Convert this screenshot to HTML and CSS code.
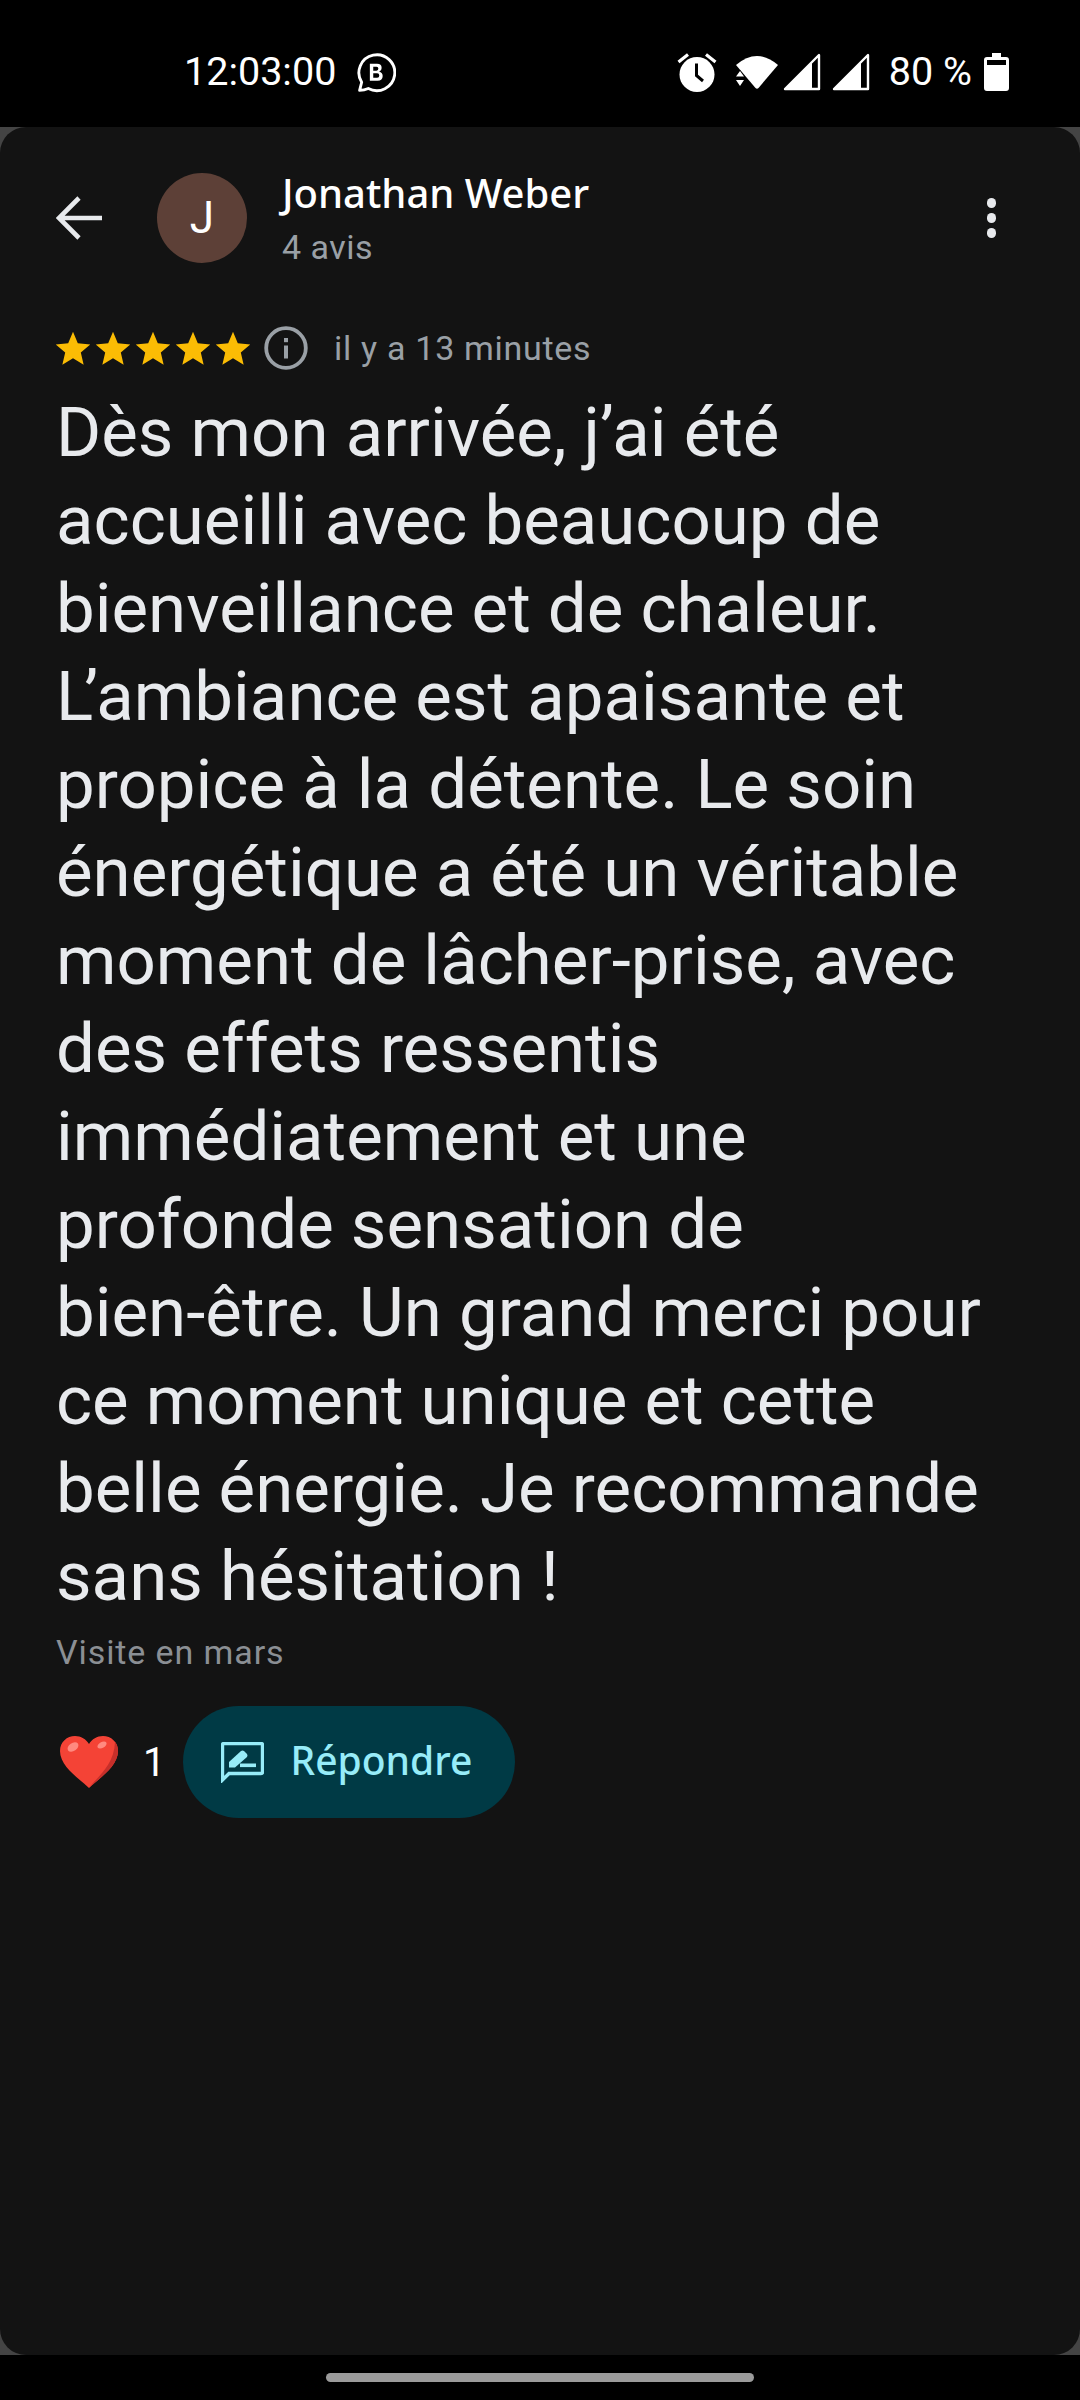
FILE: index.html
```html
<!DOCTYPE html>
<html lang="fr">
<head>
  <meta charset="UTF-8">
  <meta name="viewport" content="width=device-width, initial-scale=1.0">
  <title>Avis - Jonathan Weber</title>
  <link rel="stylesheet" href="styles.css">
</head>
<body>
  <!-- Status bar -->
  <div class="status-bar">
    <div class="status-left">
      <span class="clock">12:03:00</span>
      <svg class="biz-icon" viewBox="0 0 40 40">
        <path d="M4.5 37.5 6.5 29.5A17.5 17.5 0 1 1 13 35.6Q9 37.5 4.5 37.5Z" fill="none" stroke="#fff" stroke-width="2.8" stroke-linejoin="round"/>
        <path d="M14.5 11.5H21.5Q26 11.5 26 15.5 26 18.3 23.6 19.2 27 20 27 23.4 27 28 22 28H14.5ZM17.8 14.3V18.2H21Q22.8 18.2 22.8 16.2 22.8 14.3 21 14.3ZM17.8 20.8V25.2H21.6Q23.7 25.2 23.7 23 23.7 20.8 21.6 20.8Z" fill="#fff" fill-rule="evenodd"/>
      </svg>
    </div>
    <div class="status-right">
      <svg class="alarm-icon" viewBox="0 0 40 40">
        <path d="M1.5 10 11 2.5M38.5 10 29 2.5" stroke="#fff" stroke-width="3.2" fill="none"/>
        <circle cx="20" cy="22.5" r="17.5" fill="#fff"/>
        <path d="M19.5 11.5V23.5L26 29" stroke="#000" stroke-width="3" fill="none"/>
      </svg>
      <svg class="wifi-icon" viewBox="0 0 42 36">
        <path d="M0 11Q21-7 42 11L22.5 34Q21 35.5 19.5 34Z" fill="#fff"/>
        <path d="M0 21.5 8 21.5 4 16ZM0 25 8 25 4 31Z" fill="#000"/>
        <path d="M0 22.5H8L4 17ZM0 26H8L4 32Z" fill="#fff"/>
      </svg>
      <svg class="signal-icon" viewBox="0 0 38 38">
        <path d="M36 2V36H2Z" fill="none" stroke="#fff" stroke-width="2.4" stroke-linejoin="round"/>
        <path d="M29 9V36H2Z" fill="#fff"/>
      </svg>
      <svg class="signal-icon" viewBox="0 0 38 38">
        <path d="M36 2V36H2Z" fill="none" stroke="#fff" stroke-width="2.4" stroke-linejoin="round"/>
        <path d="M29 9V36H2Z" fill="#fff"/>
      </svg>
      <span class="battery-text">80 %</span>
      <svg class="battery-icon" viewBox="0 0 25 38">
        <path d="M8 0H17V4H22Q25 4 25 7V35Q25 38 22 38H3Q0 38 0 35V7Q0 4 3 4H8Z" fill="#fff"/>
        <rect x="3" y="7" width="19" height="5" fill="#000"/>
      </svg>
    </div>
  </div>

  <div class="card-wrap">
    <div class="card">
      <div class="review-header">
        <svg class="back-icon" viewBox="0 0 46 44">
          <path d="M46 22H4M23 2 3 22 23 42" fill="none" stroke="#e8eaed" stroke-width="4.6"/>
        </svg>
        <div class="avatar">J</div>
        <div class="author">
          <div class="author-name">Jonathan Weber</div>
          <div class="author-count">4 avis</div>
        </div>
        <div class="more-btn">
          <span class="dot"></span>
          <span class="dot"></span>
          <span class="dot"></span>
        </div>
      </div>

      <div class="rating-row">
        <div class="stars">
          <svg class="star" viewBox="0 0 24 24"><path d="M12 1.2 15.2 8.9 23.5 9.6 17.2 15 19.1 23.1 12 18.8 4.9 23.1 6.8 15 .5 9.6 8.8 8.9Z"/></svg>
          <svg class="star" viewBox="0 0 24 24"><path d="M12 1.2 15.2 8.9 23.5 9.6 17.2 15 19.1 23.1 12 18.8 4.9 23.1 6.8 15 .5 9.6 8.8 8.9Z"/></svg>
          <svg class="star" viewBox="0 0 24 24"><path d="M12 1.2 15.2 8.9 23.5 9.6 17.2 15 19.1 23.1 12 18.8 4.9 23.1 6.8 15 .5 9.6 8.8 8.9Z"/></svg>
          <svg class="star" viewBox="0 0 24 24"><path d="M12 1.2 15.2 8.9 23.5 9.6 17.2 15 19.1 23.1 12 18.8 4.9 23.1 6.8 15 .5 9.6 8.8 8.9Z"/></svg>
          <svg class="star" viewBox="0 0 24 24"><path d="M12 1.2 15.2 8.9 23.5 9.6 17.2 15 19.1 23.1 12 18.8 4.9 23.1 6.8 15 .5 9.6 8.8 8.9Z"/></svg>
        </div>
        <svg class="info-icon" viewBox="0 0 44 44">
          <circle cx="22" cy="22" r="19.8" fill="none" stroke="#9aa0a6" stroke-width="3.8"/>
          <rect x="20" y="19.5" width="4" height="13" fill="#9aa0a6"/>
          <rect x="20" y="12" width="4" height="4.2" fill="#9aa0a6"/>
        </svg>
        <span class="review-time">il y a 13 minutes</span>
      </div>

      <div class="review-text">
        <div>Dès mon arrivée, j’ai été</div>
        <div>accueilli avec beaucoup de</div>
        <div>bienveillance et de chaleur.</div>
        <div><span class="kern-l">L</span>’ambiance est apaisante et</div>
        <div>propice à la détente. Le soin</div>
        <div>énergétique a été un véritable</div>
        <div>moment de lâcher-prise, avec</div>
        <div>des effets ressentis</div>
        <div>immédiatement et une</div>
        <div>profonde sensation de</div>
        <div>bien-être. Un grand merci pour</div>
        <div>ce moment unique et cette</div>
        <div>belle énergie. Je recommande</div>
        <div>sans hésitation !</div>
      </div>
      <div class="visit-date">Visite en mars</div>

      <div class="actions">
        <svg class="heart" viewBox="0 0 58 52">
          <path d="M29 52C20 43 0 31 0 15 0 6 7 0 15 0 21 0 26 3 29 8 32 3 37 0 43 0 51 0 58 6 58 15 58 31 38 43 29 52Z" fill="#f44336"/>
          <path d="M58 15C58 31 38 43 29 52 37 41 54 30 55 6 57 8 58 11 58 15Z" fill="#c62f2a"/>
          <ellipse cx="13" cy="11" rx="6" ry="4" transform="rotate(-35 13 11)" fill="#ff8a80"/>
          <ellipse cx="42" cy="9" rx="5" ry="3" transform="rotate(-30 42 9)" fill="#ff8a80"/>
        </svg>
        <span class="like-count">1</span>
        <button class="reply-btn">
          <svg class="reply-icon" viewBox="0 0 43 41">
            <path d="M1.5 38V3Q1.5 1.5 3 1.5H40Q41.5 1.5 41.5 3V30Q41.5 31.5 40 31.5H8Z" fill="none" stroke="#97ecf8" stroke-width="3.4"/>
            <path d="M8 25.5V20L20 9Q21.5 8 23 9L26 12Q27 13.5 26 15L14 25.5Z" fill="#97ecf8"/>
            <rect x="19" y="21.5" width="16" height="3.6" fill="#97ecf8"/>
          </svg>
          <span class="reply-label">Répondre</span>
        </button>
      </div>
    </div>
  </div>

  <div class="nav-bar">
    <div class="home-pill"></div>
  </div>
</body>
</html>
```

FILE: styles.css
```css
html, body {
  margin: 0;
  padding: 0;
  height: 100%;
}
body {
  width: 1080px;
  height: 2400px;
  display: flex;
  flex-direction: column;
  background: #000;
  font-family: 'Roboto', 'Liberation Sans', sans-serif;
  overflow: hidden;
}

/* Status bar */
.status-bar {
  height: 127px;
  flex: none;
  display: flex;
  justify-content: space-between;
  align-items: center;
  padding: 0 71px 0 184px;
  box-sizing: border-box;
  color: #fff;
}
.status-left,
.status-right {
  display: flex;
  align-items: center;
  padding-top: 17px;
}
.clock {
  font-size: 39.5px;
  line-height: 44px;
  margin-right: 19px;
}
.biz-icon {
  width: 41px;
  height: 41px;
}
.alarm-icon {
  width: 40px;
  height: 40px;
  margin-right: 19px;
}
.wifi-icon {
  width: 42px;
  height: 36px;
  margin-right: 5px;
}
.signal-icon {
  width: 38px;
  height: 38px;
  margin-right: 11px;
}
.signal-icon + .battery-text {
  margin-left: 8px;
}
.battery-text {
  font-size: 39.5px;
  line-height: 44px;
  margin-right: 12px;
}
.battery-icon {
  width: 25px;
  height: 38px;
}

/* Card */
.card-wrap {
  flex: none;
  height: 2228px;
  background: #444;
}
.card {
  height: 100%;
  box-sizing: border-box;
  padding: 46px 76px 0 56px;
  background: #131313;
  border-radius: 26px;
}

.review-header {
  display: flex;
  align-items: center;
  height: 90px;
}
.back-icon {
  width: 46px;
  height: 44px;
  margin-right: 55px;
}
.avatar {
  width: 90px;
  height: 90px;
  flex: none;
  border-radius: 50%;
  background: #5d4037;
  color: #fff;
  font-size: 44px;
  line-height: 90px;
  text-align: center;
  margin-right: 35px;
}
.author {
  flex: 1;
}
.author-name {
  color: #fff;
  font-family: 'Noto Sans', 'Roboto', sans-serif;
  font-size: 40px;
  font-weight: 500;
  line-height: 46px;
}
.author-count {
  color: #9aa0a6;
  font-size: 34px;
  line-height: 40px;
  margin-top: 11px;
  letter-spacing: 0.5px;
}
.more-btn {
  display: flex;
  flex-direction: column;
  gap: 5.5px;
  margin-right: 8px;
}
.dot {
  width: 9.5px;
  height: 9.5px;
  border-radius: 50%;
  background: #e8eaed;
}

.rating-row {
  display: flex;
  align-items: center;
  margin-top: 63px;
  height: 44px;
}
.stars {
  display: flex;
  gap: 4px;
  margin-left: -1px;
  margin-right: 13px;
}
.star {
  width: 36px;
  height: 36px;
  fill: #fbbc04;
}
.info-icon {
  width: 44px;
  height: 44px;
  margin-right: 26px;
}
.review-time {
  color: #9aa0a6;
  font-size: 34px;
  letter-spacing: 0.7px;
}

.review-text {
  margin-top: 19px;
  color: #e8eaed;
  font-size: 69px;
  line-height: 88px;
  white-space: nowrap;
}
/* the apostrophe tucks in over the L */
.kern-l {
  letter-spacing: -9px;
}
.visit-date {
  color: #8b8f94;
  font-size: 34px;
  line-height: 40px;
  letter-spacing: 0.9px;
  margin-top: 11px;
}

.actions {
  display: flex;
  align-items: center;
  margin-top: 34px;
  height: 112px;
}
.heart {
  width: 58px;
  height: 52px;
  margin-left: 4px;
  margin-right: 25px;
}
.like-count {
  color: #fff;
  font-size: 40px;
  margin-right: 18px;
}
.reply-btn {
  display: flex;
  align-items: center;
  height: 112px;
  width: 332px;
  box-sizing: border-box;
  padding: 0 0 0 38px;
  border: 0;
  border-radius: 56px;
  background: #003a45;
  color: #97ecf8;
  font-family: 'Noto Sans', 'Roboto', sans-serif;
  font-size: 39px;
  font-weight: 500;
}
.reply-icon {
  width: 43px;
  height: 41px;
  margin-right: 26px;
}
.reply-label {
  padding-bottom: 6px;
}

/* Nav bar */
.nav-bar {
  flex: 1;
  display: flex;
  justify-content: center;
  padding-top: 18px;
}
.home-pill {
  width: 428px;
  height: 9px;
  border-radius: 5px;
  background: #9b9b9b;
}
```
